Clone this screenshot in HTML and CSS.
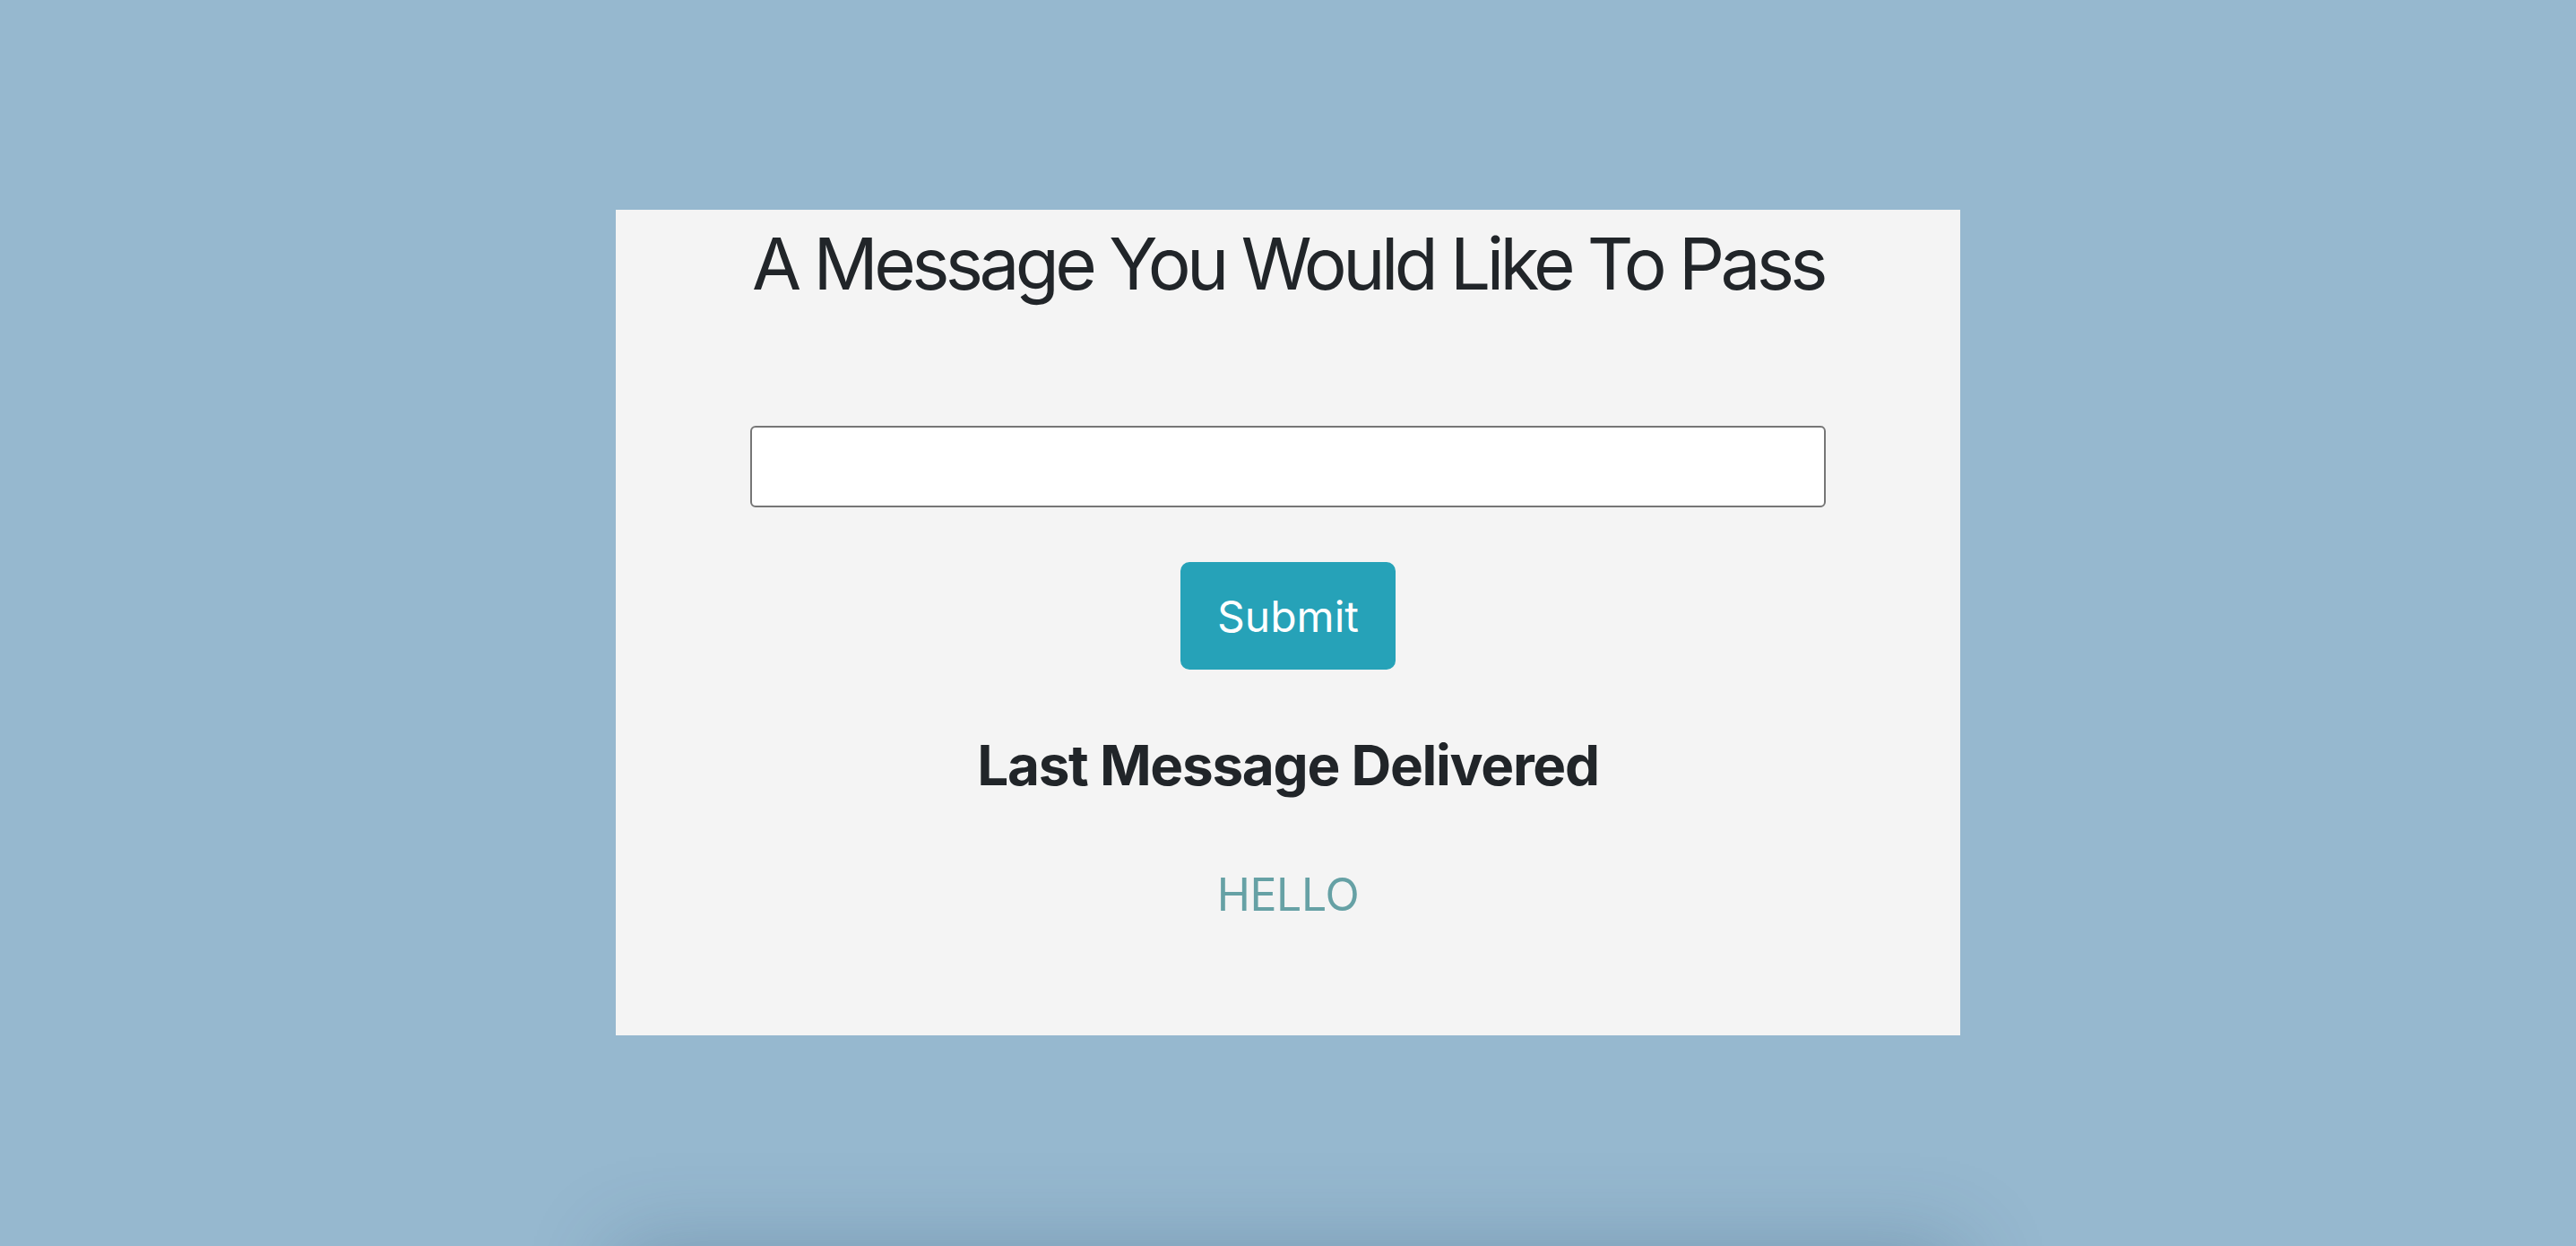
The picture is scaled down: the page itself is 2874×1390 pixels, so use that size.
FILE: index.html
```html
<!DOCTYPE html>
<html lang="en">
<head>
<meta charset="utf-8">
<title>Message</title>
<link rel="stylesheet" href="styles.css">
</head>
<body>
<main class="page">
  <section class="card">
    <h1 class="title">A Message You Would Like To Pass</h1>
    <input class="field" type="text" aria-label="Message">
    <button class="submit" type="button">Submit</button>
    <h3 class="last-heading">Last Message Delivered</h3>
    <p class="last-message">HELLO</p>
  </section>
  <section class="below"></section>
</main>
</body>
</html>
```
FILE: styles.css
```css
html, body {
  margin: 0;
  padding: 0;
  height: 100%;
  overflow: hidden;
}
body {
  background: #96b8cf;
  font-family: Inter, "Noto Sans", sans-serif;
  color: #212529;
}
.page {
  display: flex;
  flex-direction: column;
  align-items: center;
  padding-top: 234px;
}
.card {
  width: 1500px;
  height: 921px;
  box-sizing: border-box;
  background: #f4f4f4;
  display: flex;
  flex-direction: column;
  align-items: center;
  padding-top: 12px;
}
.title {
  margin: 0;
  font-size: 80px;
  font-weight: 400;
  line-height: 96px;
  letter-spacing: -4.6px;
}
.field {
  margin-top: 133px;
  width: 1200px;
  height: 91px;
  box-sizing: border-box;
  border: 2px solid #767676;
  border-radius: 6px;
  background: #fff;
  outline: none;
}
.submit {
  margin-top: 61px;
  width: 240px;
  height: 120px;
  border: none;
  border-radius: 10px;
  background: #26a2b8;
  color: #fff;
  font-family: Inter, "Noto Sans", sans-serif;
  font-size: 48px;
  font-weight: 400;
  padding: 0;
}
.last-heading {
  margin: 70px 0 0;
  font-size: 62px;
  font-weight: 700;
  line-height: 74px;
  letter-spacing: -1.3px;
}
.last-message {
  margin: 70px 0 0;
  font-size: 50px;
  line-height: 75px;
  color: #66a1a5;
  letter-spacing: -0.4px;
}
.below {
  margin-top: 240px;
  width: 1500px;
  height: 400px;
  background: #96b8cf;
  box-shadow: 0 -6px 90px rgba(40, 70, 100, 0.26);
}
```
